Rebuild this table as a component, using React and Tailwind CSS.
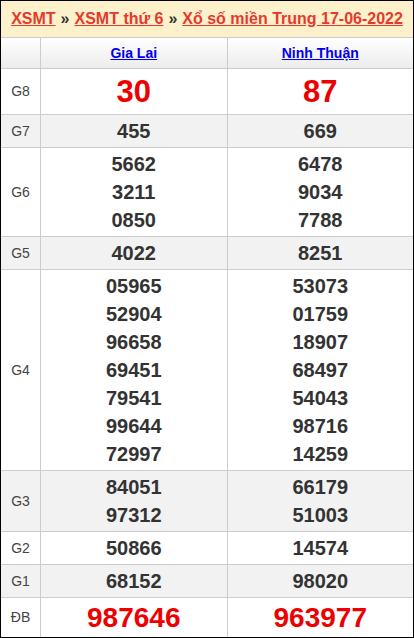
const rows = [
  { label: 'G8', a: ['30'], b: ['87'], kind: 'big' },
  { label: 'G7', a: ['455'], b: ['669'] },
  { label: 'G6', a: ['5662', '3211', '0850'], b: ['6478', '9034', '7788'] },
  { label: 'G5', a: ['4022'], b: ['8251'] },
  {
    label: 'G4',
    a: ['05965', '52904', '96658', '69451', '79541', '99644', '72997'],
    b: ['53073', '01759', '18907', '68497', '54043', '98716', '14259'],
  },
  { label: 'G3', a: ['84051', '97312'], b: ['66179', '51003'] },
  { label: 'G2', a: ['50866'], b: ['14574'] },
  { label: 'G1', a: ['68152'], b: ['98020'] },
  { label: 'ĐB', a: ['987646'], b: ['963977'], kind: 'db' },
]

function Numbers({ items, kind }) {
  let cls = 'text-[20px] leading-[28px] text-[#333]'
  if (kind === 'big') cls = 'text-[31px] leading-[41px] text-[#ee0000]'
  if (kind === 'db') cls = 'text-[28px] leading-[35px] text-[#ee0000]'
  return (
    <div className={'flex flex-col items-center py-[2px] font-bold ' + cls}>
      {items.map((n, i) => (
        <span key={i}>{n}</span>
      ))}
    </div>
  )
}

export default function App() {
  return (
    <div
      className="w-[414px] h-[638px] border border-black bg-white overflow-hidden"
      style={{ fontFamily: '"Liberation Sans", Arial, sans-serif' }}
    >
      <div className="h-[36px] bg-[#fdf1cc] flex items-center justify-center gap-[5px] text-[16px] font-bold">
        <a className="text-[#e5392d] underline">XSMT</a>
        <span className="text-[#333]">»</span>
        <a className="text-[#e5392d] underline">XSMT thứ 6</a>
        <span className="text-[#333]">»</span>
        <a className="text-[#e5392d] underline">Xổ số miền Trung 17-06-2022</a>
      </div>

      <div className="flex h-[31px] border-t border-[#ccc] bg-linear-to-b from-white to-[#ececec]">
        <div className="w-[40px] border-r border-[#ccc]" />
        <div className="flex-1 border-r border-[#ccc] flex items-center justify-center">
          <a className="text-[14px] font-bold text-[#0000ee] underline">Gia Lai</a>
        </div>
        <div className="flex-1 flex items-center justify-center">
          <a className="text-[14px] font-bold text-[#0000ee] underline">Ninh Thuận</a>
        </div>
      </div>

      {rows.map((r, i) => (
        <div
          key={r.label}
          className={'flex border-t border-[#ccc] ' + (i % 2 === 1 ? 'bg-[#f2f2f2]' : 'bg-white')}
        >
          <div className="w-[40px] border-r border-[#ccc] flex items-center justify-center text-[14px] text-[#444]">
            {r.label}
          </div>
          <div className="flex-1 border-r border-[#ccc]">
            <Numbers items={r.a} kind={r.kind} />
          </div>
          <div className="flex-1">
            <Numbers items={r.b} kind={r.kind} />
          </div>
        </div>
      ))}
    </div>
  )
}
